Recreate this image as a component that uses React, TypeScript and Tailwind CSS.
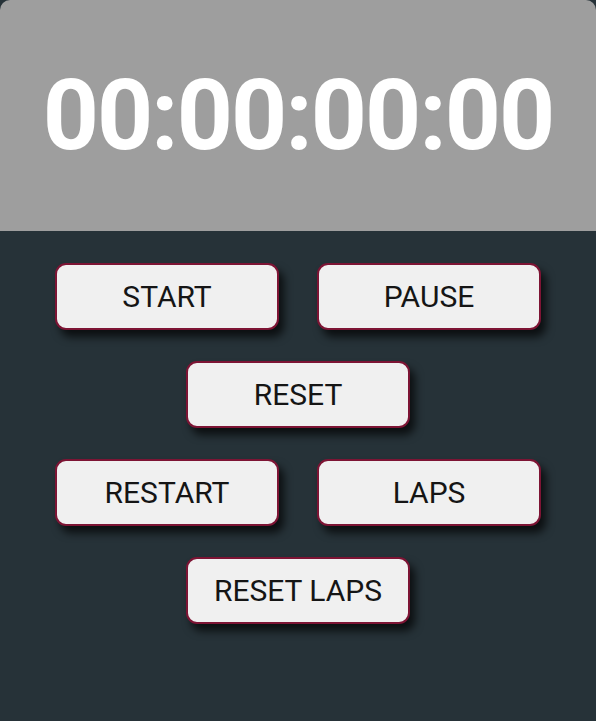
const rows = [['START', 'PAUSE'], ['RESET'], ['RESTART', 'LAPS'], ['RESET LAPS']];

export default function App() {
  return (
    <div className="min-h-[721px] w-full bg-[#263238] font-['Roboto',sans-serif]">
      <div className="flex h-[231px] items-center justify-center rounded-t-[10px] bg-[#9e9e9e]">
        <span className="text-[98px] font-bold leading-none tracking-[-2px] text-white">00:00:00:00</span>
      </div>
      <div className="flex flex-col items-center gap-[31px] pt-[32px]">
        {rows.map((row, i) => (
          <div key={i} className="flex gap-[38px]">
            {row.map((label) => (
              <button
                key={label}
                className="h-[67px] w-[224px] rounded-[11px] border-2 border-[#7d1434] bg-[#f0f0f0] text-[30px] text-[#151515] shadow-[5px_7px_8px_rgba(0,0,0,0.7)]"
              >
                {label}
              </button>
            ))}
          </div>
        ))}
      </div>
    </div>
  );
}
